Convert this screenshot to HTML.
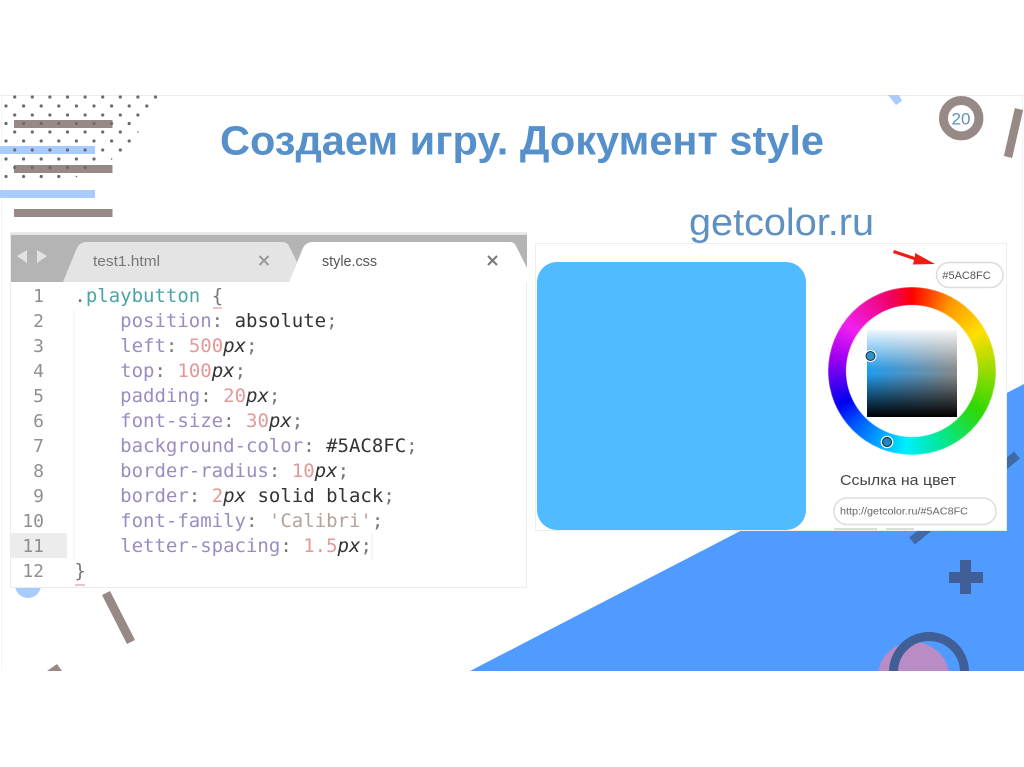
<!DOCTYPE html>
<html lang="ru"><head><meta charset="utf-8"><title>Создаем игру. Документ style</title>
<style>
html,body{margin:0;padding:0;background:#fff;width:1024px;height:767px;overflow:hidden}
#s{position:absolute;left:0;top:0}
.ab{position:absolute}
.ln{position:absolute;left:11px;width:33px;text-align:right;font:18px/25px "DejaVu Sans Mono",monospace;color:#8f8f8f;height:25px;filter:blur(.35px)}
.cd{position:absolute;left:74.4px;font:19px/25px "DejaVu Sans Mono",monospace;color:#333;white-space:pre;height:25px;filter:blur(.35px)}
.p{color:#9b8cc0}.n{color:#e29a98}.x{font-style:italic;color:#333}.g{color:#777}.t{color:#4ba3a8}.q{color:#b3a497}
#wheel{position:absolute;left:827.5px;top:287px;width:168px;height:168px;border-radius:50%;background:conic-gradient(#f00,#f90 30deg,#ffdf00 60deg,#30d800 120deg,#00e8a0 160deg,#00eeff 185deg,#0060ff 225deg,#0000f0 245deg,#a000f0 280deg,#f020f0 305deg,#f00060 345deg,#f00);-webkit-mask:radial-gradient(circle,transparent 65.5px,#000 66.5px);mask:radial-gradient(circle,transparent 65.5px,#000 66.5px);filter:blur(.4px)}
#sq{position:absolute;left:866.5px;top:330px;width:90.5px;height:87px;background:linear-gradient(to bottom,rgba(255,255,255,.92),rgba(255,255,255,0) 45%,rgba(0,0,0,0) 50%,#000),linear-gradient(to right,#1f9df0,#8a8a8a)}
</style></head><body>
<svg id="s" width="1024" height="767" viewBox="0 0 1024 767" xmlns="http://www.w3.org/2000/svg">
<rect x="0" y="95" width="1024" height="1" fill="#ececec"/>
<rect x="1" y="95" width="1" height="576" fill="#f5f5f5"/>
<rect x="1022" y="95" width="1" height="290" fill="#f5f5f5"/>
<path d="M470 671L1024 384V671Z" fill="#4f9bff"/>
<path d="M1017 455L912 541" stroke="#3f6aa5" stroke-width="9"/>
<path d="M960 560h11v12h12v11h-12v11h-11v-11h-11v-11h11z" fill="#3f5f96"/>
<clipPath id="c"><rect x="800" y="500" width="224" height="171"/></clipPath>
<g clip-path="url(#c)"><circle cx="913.5" cy="678" r="36" fill="#b98cc5"/><circle cx="929" cy="672" r="35.5" fill="none" stroke="#3f5f96" stroke-width="9"/></g>
<path d="M888 95H899L902 101L896 105Z" fill="#a9ccff"/>
<circle cx="961.2" cy="118.2" r="17.7" fill="none" stroke="#978a86" stroke-width="9"/>
<path d="M1019 109L1008 157" stroke="#978a86" stroke-width="8.500"/>
<path d="M106 593L131 642" stroke="#978a86" stroke-width="9"/>
<path d="M47 671L57 664L62 671Z" fill="#978a86"/>
<circle cx="28" cy="585" r="13" fill="#a9ccff"/>
<g fill="#978a86"><rect x="14" y="120" width="98.5" height="8"/><rect x="14" y="165" width="98.5" height="8"/><rect x="14" y="209" width="98.5" height="8"/></g>
<g fill="#a9ccff"><rect x="0" y="146" width="95" height="8"/><rect x="0" y="190" width="95" height="8"/></g>
<g fill="#6f6a6a" id="dots">
<circle cx="14.7" cy="97" r="1.6"/><circle cx="32.3" cy="97" r="1.6"/><circle cx="49.9" cy="97" r="1.6"/><circle cx="67.5" cy="97" r="1.6"/><circle cx="85.1" cy="97" r="1.6"/><circle cx="102.7" cy="97" r="1.6"/><circle cx="120.3" cy="97" r="1.6"/><circle cx="137.9" cy="97" r="1.6"/><circle cx="155.5" cy="97" r="1.6"/>
<circle cx="6" cy="106" r="1.6"/><circle cx="23.6" cy="106" r="1.6"/><circle cx="41.2" cy="106" r="1.6"/><circle cx="58.8" cy="106" r="1.6"/><circle cx="76.4" cy="106" r="1.6"/><circle cx="94" cy="106" r="1.6"/><circle cx="111.6" cy="106" r="1.6"/><circle cx="129.2" cy="106" r="1.6"/><circle cx="146.8" cy="106" r="1.6"/>
<circle cx="14.7" cy="115" r="1.6"/><circle cx="32.3" cy="115" r="1.6"/><circle cx="49.9" cy="115" r="1.6"/><circle cx="67.5" cy="115" r="1.6"/><circle cx="85.1" cy="115" r="1.6"/><circle cx="102.7" cy="115" r="1.6"/><circle cx="120.3" cy="115" r="1.6"/><circle cx="137.9" cy="115" r="1.6"/>
<circle cx="6" cy="123.5" r="1.6"/><circle cx="23.6" cy="123.5" r="1.6"/><circle cx="41.2" cy="123.5" r="1.6"/><circle cx="58.8" cy="123.5" r="1.6"/><circle cx="76.4" cy="123.5" r="1.6"/><circle cx="94" cy="123.5" r="1.6"/><circle cx="111.6" cy="123.5" r="1.6"/><circle cx="129.2" cy="123.5" r="1.6"/>
<circle cx="14.7" cy="132" r="1.6"/><circle cx="32.3" cy="132" r="1.6"/><circle cx="49.9" cy="132" r="1.6"/><circle cx="67.5" cy="132" r="1.6"/><circle cx="85.1" cy="132" r="1.6"/><circle cx="102.7" cy="132" r="1.6"/><circle cx="120.3" cy="132" r="1.6"/><circle cx="137.9" cy="132" r=".8"/>
<circle cx="6" cy="141" r="1.6"/><circle cx="23.6" cy="141" r="1.6"/><circle cx="41.2" cy="141" r="1.6"/><circle cx="58.8" cy="141" r="1.6"/><circle cx="76.4" cy="141" r="1.6"/><circle cx="94" cy="141" r="1.6"/><circle cx="111.6" cy="141" r="1.6"/><circle cx="129.2" cy="141" r="1.6"/>
<circle cx="14.7" cy="150" r="1.6"/><circle cx="32.3" cy="150" r="1.6"/><circle cx="49.9" cy="150" r="1.6"/><circle cx="67.5" cy="150" r="1.6"/><circle cx="85.1" cy="150" r="1.6"/><circle cx="102.7" cy="150" r="1.6"/><circle cx="120.3" cy="150" r="1.6"/>
<circle cx="6" cy="159" r="1.6"/><circle cx="23.6" cy="159" r="1.6"/><circle cx="41.2" cy="159" r="1.6"/><circle cx="58.8" cy="159" r="1.6"/><circle cx="76.4" cy="159" r="1.6"/><circle cx="94" cy="159" r="1.6"/><circle cx="111.6" cy="159" r=".8"/>
<circle cx="14.7" cy="167.5" r="1.6"/><circle cx="32.3" cy="167.5" r="1.6"/><circle cx="49.9" cy="167.5" r="1.6"/><circle cx="67.5" cy="167.5" r="1.6"/><circle cx="85.1" cy="167.5" r="1.6"/>
<circle cx="6" cy="176.5" r="1.6"/><circle cx="23.6" cy="176.5" r="1.6"/><circle cx="41.2" cy="176.5" r="1.6"/><circle cx="58.8" cy="176.5" r="1.6"/><circle cx="76.4" cy="176.5" r=".8"/>
</g>
<text x="220" y="154.500" font-family="Liberation Sans,sans-serif" font-weight="700" font-size="41" fill="#5590cb" textLength="604" lengthAdjust="spacingAndGlyphs">Создаем игру. Документ style</text>
<text x="689" y="235" font-family="Liberation Sans,sans-serif" font-size="38" fill="#5f90bf" textLength="185" lengthAdjust="spacingAndGlyphs">getcolor.ru</text>
<text x="961" y="124.500" text-anchor="middle" font-family="Liberation Sans,sans-serif" font-size="17" fill="#5f90bf">20</text>
<!-- editor -->
<rect x="10.500" y="232.500" width="516" height="355" fill="#fff" stroke="#ececec"/>
<rect x="11" y="233" width="516" height="49" fill="#b4b4b4"/>
<rect x="11" y="233" width="516" height="2" fill="#e6e6e6"/>
<path d="M63 282L76 250Q79 242 87 242H282Q287 242 289 246L297 262L289 282Z" fill="#e4e4e4"/>
<path d="M289 282L303 248Q306 242 313 242H510Q514 242 516 246L527 268V282Z" fill="#fff"/>
<path d="M17 256L27 250V263ZM47 256L37 250V263Z" fill="#e2e2e2"/>
<rect x="11" y="533" width="56" height="25" fill="#ececec"/>
<path d="M74 310V559" stroke="#e3e3e3" stroke-width="1" stroke-dasharray="1 1"/>
<path d="M372 533V560" stroke="#eeeeee"/>
<path d="M259.500 256L268.500 265M268.500 256L259.500 265" stroke="#9a9a9a" stroke-width="2"/>
<path d="M488 256L497 265M497 256L488 265" stroke="#777" stroke-width="2"/>
<path d="M213 308H222M75 585H85" stroke="#d98a88" stroke-width="1"/>
<text x="93" y="266" font-family="Liberation Sans,sans-serif" font-size="14.500" fill="#777" textLength="67" lengthAdjust="spacingAndGlyphs">test1.html</text>
<text x="322" y="266" font-family="Liberation Sans,sans-serif" font-size="14.500" fill="#555" textLength="55" lengthAdjust="spacingAndGlyphs">style.css</text>
<!-- panel -->
<rect x="535.500" y="243.500" width="471" height="287" fill="#fff" stroke="#eeeeee"/>
<rect x="537" y="262" width="269" height="268" rx="20" fill="#50bbfe"/>
<rect x="936.500" y="262.500" width="66.500" height="25" rx="12.500" fill="#fff" stroke="#dcdcdc" stroke-width="1.500"/>
<text x="966.500" y="279" text-anchor="middle" font-family="Liberation Sans,sans-serif" font-size="11" fill="#555">#5AC8FC</text>
<path d="M894 250L915 257L915 253L935 264L913 264.500L914 260L893 253Z" fill="#ee1c12"/>
<text x="840" y="485" font-family="Liberation Sans,sans-serif" font-size="14.500" fill="#444" textLength="116" lengthAdjust="spacingAndGlyphs">Ссылка на цвет</text>
<rect x="834" y="498" width="162" height="26.500" rx="13" fill="#fff" stroke="#dedede" stroke-width="1.500"/>
<text x="840" y="514.500" font-family="Liberation Sans,sans-serif" font-size="10.500" fill="#666" textLength="128" lengthAdjust="spacingAndGlyphs">http://getcolor.ru/#5AC8FC</text>
<path d="M834 529H877M886 529H914" stroke="#b5bdc6" stroke-width="1"/>
</svg>
<div id="wheel"></div>
<div id="sq"></div>
<svg class="ab" style="left:860px;top:345px" width="40" height="110" viewBox="860 345 40 110" xmlns="http://www.w3.org/2000/svg">
<circle cx="870.500" cy="356" r="4.500" fill="#2f93c9" stroke="#123" stroke-width="1"/><circle cx="870.500" cy="356" r="5.500" fill="none" stroke="#fff" stroke-width="1"/>
<circle cx="887" cy="442" r="4.500" fill="#1f86c0" stroke="#123" stroke-width="1"/><circle cx="887" cy="442" r="5.700" fill="none" stroke="#fff" stroke-width="1.200"/>
</svg>
<div class="ln" style="top:284px">1</div><div class="ln" style="top:309px">2</div><div class="ln" style="top:334px">3</div><div class="ln" style="top:359px">4</div><div class="ln" style="top:384px">5</div><div class="ln" style="top:409px">6</div><div class="ln" style="top:434px">7</div><div class="ln" style="top:459px">8</div><div class="ln" style="top:484px">9</div><div class="ln" style="top:509px">10</div><div class="ln" style="top:534px">11</div><div class="ln" style="top:559px">12</div>
<div class="cd" style="top:284px"><span class="g">.</span><span class="t">playbutton</span> <span class="g">{</span></div>
<div class="cd" style="top:309px">    <span class="p">position</span><span class="g">:</span> absolute<span class="g">;</span></div>
<div class="cd" style="top:334px">    <span class="p">left</span><span class="g">:</span> <span class="n">500</span><span class="x">px</span><span class="g">;</span></div>
<div class="cd" style="top:359px">    <span class="p">top</span><span class="g">:</span> <span class="n">100</span><span class="x">px</span><span class="g">;</span></div>
<div class="cd" style="top:384px">    <span class="p">padding</span><span class="g">:</span> <span class="n">20</span><span class="x">px</span><span class="g">;</span></div>
<div class="cd" style="top:409px">    <span class="p">font-size</span><span class="g">:</span> <span class="n">30</span><span class="x">px</span><span class="g">;</span></div>
<div class="cd" style="top:434px">    <span class="p">background-color</span><span class="g">:</span> #5AC8FC<span class="g">;</span></div>
<div class="cd" style="top:459px">    <span class="p">border-radius</span><span class="g">:</span> <span class="n">10</span><span class="x">px</span><span class="g">;</span></div>
<div class="cd" style="top:484px">    <span class="p">border</span><span class="g">:</span> <span class="n">2</span><span class="x">px</span> solid black<span class="g">;</span></div>
<div class="cd" style="top:509px">    <span class="p">font-family</span><span class="g">:</span> <span class="q">'Calibri'</span><span class="g">;</span></div>
<div class="cd" style="top:534px">    <span class="p">letter-spacing</span><span class="g">:</span> <span class="n">1.5</span><span class="x">px</span><span class="g">;</span></div>
<div class="cd" style="top:559px"><span class="g">}</span></div>
</body></html>
